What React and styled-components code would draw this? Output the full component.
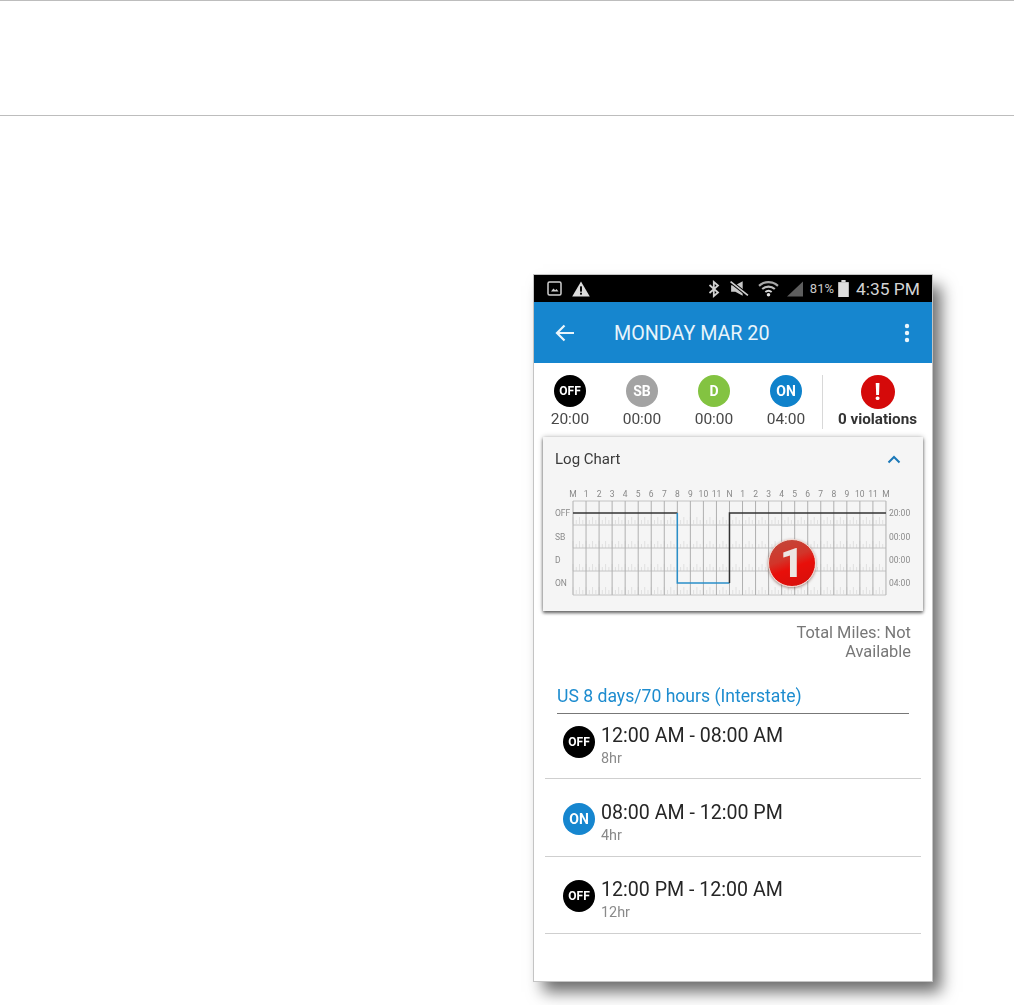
import styled, { createGlobalStyle } from 'styled-components';

const GlobalStyle = createGlobalStyle`
  html, body {
    margin: 0;
    padding: 0;
    background: #fff;
    font-family: Roboto, "Liberation Sans", sans-serif;
  }
`;

const Page = styled.div`
  width: 1014px;
  height: 1005px;
  overflow: hidden;
`;

const HeaderBand = styled.div`
  height: 114px;
  border-top: 1px solid #bdbdbd;
  border-bottom: 1px solid #bdbdbd;
`;

const Phone = styled.div`
  width: 398px;
  height: 706px;
  margin: 159px 0 0 534px;
  background: #fff;
  outline: 1px solid #c4c4c4;
  box-shadow: 9px 11px 15px rgba(0, 0, 0, 0.58);
  display: flex;
  flex-direction: column;
  filter: blur(0.35px);
`;

const StatusBar = styled.div`
  height: 27px;
  flex: none;
  background: #000;
  display: flex;
  align-items: center;
  padding: 0 12px 0 13px;
  color: #d6d6d6;
`;

const StatusLeft = styled.div`
  display: flex;
  align-items: center;
  gap: 10px;
  flex: 1;
`;

const StatusRight = styled.div`
  display: flex;
  align-items: center;
`;

const Percent = styled.span`
  font-size: 13px;
  margin: 0 4px 0 6px;
  color: #c8c8c8;
`;

const Clock = styled.span`
  font-size: 17.4px;
  margin-left: 7px;
  color: #d4d4d4;
`;

const AppBar = styled.div`
  height: 61px;
  flex: none;
  background: #1686cf;
  color: #e8f4fb;
  display: flex;
  align-items: center;
  padding: 0 22px 0 21px;
`;

const AppTitle = styled.div`
  flex: 1;
  margin: 2px 0 0 39px;
  font-size: 19.7px;
  white-space: nowrap;
`;

const StatsRow = styled.div`
  height: 74px;
  flex: none;
  display: flex;
  align-items: stretch;
`;

const Stat = styled.div`
  width: 72px;
  display: flex;
  flex-direction: column;
  align-items: center;
  padding-top: 12px;
  box-sizing: border-box;
`;

const Circle = styled.div`
  width: ${(p) => p.$size || 32}px;
  height: ${(p) => p.$size || 32}px;
  flex: none;
  border-radius: 50%;
  background: ${(p) => p.$color};
  color: #fff;
  font-weight: 700;
  font-size: ${(p) => p.$font || 13}px;
  display: flex;
  align-items: center;
  justify-content: center;
`;

const StatTime = styled.div`
  font-size: 15.5px;
  line-height: 18px;
  margin-top: 3px;
  color: #484848;
`;

const ViolationStat = styled.div`
  flex: 1;
  margin: 12px 0 8px;
  border-left: 1px solid #d8d8d8;
  display: flex;
  flex-direction: column;
  align-items: center;
`;

const ViolationText = styled.div`
  font-size: 15.2px;
  line-height: 18px;
  font-weight: 700;
  margin-top: 1px;
  color: #333;
  white-space: nowrap;
`;

const ChartCard = styled.div`
  position: relative;
  flex: none;
  width: 380px;
  height: 174px;
  margin-left: 9px;
  background: #f5f5f5;
  box-shadow: 0 2px 3px rgba(0, 0, 0, 0.55), 0 0 5px rgba(0, 0, 0, 0.28);
`;

const ChartHead = styled.div`
  height: 44px;
  display: flex;
  align-items: center;
  justify-content: space-between;
  padding: 0 22px 0 12px;
  font-size: 15px;
  color: #3a3a3a;
`;

const ChartSvg = styled.svg`
  display: block;
  font-family: Roboto, "Liberation Sans", sans-serif;
`;

const NumberBadge = styled.div`
  position: absolute;
  left: 225px;
  top: 102px;
  width: 46px;
  height: 46px;
  border-radius: 50%;
  border: 1.5px solid #f3d5cd;
  background: linear-gradient(160deg, #c04a3c 0%, #d2352a 40%, #e80f0a 58%, #d40f0c 100%);
  box-shadow: 0 1px 3px rgba(90, 40, 30, 0.55);
  color: #ece6e3;
  font-size: 41px;
  font-weight: 900;
  line-height: 47px;
  text-align: center;
`;

const TotalMiles = styled.div`
  margin: 12px 21px 0 auto;
  width: 130px;
  text-align: right;
  font-size: 16.4px;
  line-height: 19px;
  color: #777;
`;

const SectionTitle = styled.div`
  margin: 25px 23px 0;
  height: 27px;
  line-height: 21px;
  font-size: 17.6px;
  color: #1d8ccf;
  border-bottom: 1.5px solid #777;
  white-space: nowrap;
`;

const LogList = styled.div`
  margin: 0 11px;
`;

const LogRow = styled.div`
  height: ${(p) => p.$height}px;
  display: flex;
  gap: 6px;
  padding: ${(p) => p.$top}px 0 0 18px;
  box-sizing: border-box;
  border-bottom: 1px solid #cfcfcf;
`;

const LogIcon = styled(Circle)`
  margin-top: 1px;
`;

const LogTime = styled.div`
  font-size: 19.6px;
  line-height: 22px;
  color: #262626;
  white-space: nowrap;
`;

const LogDuration = styled.div`
  font-size: 14.4px;
  line-height: 16px;
  margin-top: 4px;
  color: #8a8a8a;
`;

const hours = ['M', '1', '2', '3', '4', '5', '6', '7', '8', '9', '10', '11', 'N', '1', '2', '3', '4', '5', '6', '7', '8', '9', '10', '11', 'M'];
const stats = [
  { label: 'OFF', color: '#000', time: '20:00', font: 12 },
  { label: 'SB', color: '#a3a3a3', time: '00:00', font: 14 },
  { label: 'D', color: '#83c341', time: '00:00', font: 14 },
  { label: 'ON', color: '#0f82cb', time: '04:00', font: 14 },
];
const rows = [
  { label: 'OFF', color: '#000', font: 12, time: '12:00 AM - 08:00 AM', dur: '8hr', height: 65, top: 11 },
  { label: 'ON', color: '#1686cf', font: 14, time: '08:00 AM - 12:00 PM', dur: '4hr', height: 78, top: 23 },
  { label: 'OFF', color: '#000', font: 12, time: '12:00 PM - 12:00 AM', dur: '12hr', height: 77, top: 22 },
];

// svg origin is the card corner + 44px head, so x = page x - 543, y = page y - 481
const X0 = 30;
const STEP = 13.04;
const rowTops = [20, 44, 67, 90, 114];
const rowLabels = [['OFF', '20:00', 32], ['SB', '00:00', 56], ['D', '00:00', 79], ['ON', '04:00', 102]];

const LogChart = () => (
  <ChartSvg width="380" height="130" viewBox="0 0 380 130">
    {hours.map((h, i) => (
      <text key={i} x={X0 + i * STEP} y="16" fontSize="8.5" fill="#888" textAnchor="middle">{h}</text>
    ))}
    {/* quarter hour ticks */}
    {rowTops.slice(0, 4).map((y) =>
      Array.from({ length: 96 }).map((_, i) => (
        <line
          key={`${y}-${i}`}
          x1={X0 + (i * STEP) / 4}
          x2={X0 + (i * STEP) / 4}
          y1={y + (i % 2 === 0 ? 16 : 19)}
          y2={y + 23}
          stroke="#e0e0e0"
          strokeWidth="1"
        />
      ))
    )}
    {rowTops.map((y) => (
      <line key={y} x1={X0} x2={X0 + 24 * STEP} y1={y} y2={y} stroke="#c4c4c4" strokeWidth="1" />
    ))}
    {hours.map((_, i) => (
      <line key={i} x1={X0 + i * STEP} x2={X0 + i * STEP} y1="20" y2="114" stroke="#b0b0b0" strokeWidth="1" />
    ))}
    {rowLabels.map(([name, total, y]) => (
      <g key={name}>
        <text x="12" y={y + 3} fontSize="8.5" fill="#8a8a8a">{name}</text>
        <text x="346" y={y + 3} fontSize="8.5" fill="#8a8a8a">{total}</text>
      </g>
    ))}
    <path d={`M${X0} 32H${X0 + 8 * STEP}`} fill="none" stroke="#333" strokeWidth="1.5" />
    <path d={`M${X0 + 8 * STEP} 32V102H${X0 + 12 * STEP}`} fill="none" stroke="#2a8fc9" strokeWidth="1.5" />
    <path d={`M${X0 + 12 * STEP} 102V32H${X0 + 24 * STEP}`} fill="none" stroke="#333" strokeWidth="1.5" />
  </ChartSvg>
);

export default function App() {
  return (
    <Page>
      <GlobalStyle />
      <HeaderBand />
      <Phone>
        <StatusBar>
          <StatusLeft>
            <svg width="15" height="15" viewBox="0 0 15 15">
              <rect x="1" y="1" width="13" height="13" rx="1.5" fill="none" stroke="#d0d0d0" strokeWidth="1.5" />
              <path d="M4 10.5l2.4-3 1.8 1.8 1.3-1.2L11.5 10.5z" fill="#d0d0d0" />
            </svg>
            <svg width="18" height="16" viewBox="0 0 17 15">
              <path d="M8.5 0.5L16.8 14.5H0.2z" fill="#dcdcdc" />
              <rect x="7.6" y="5" width="1.8" height="5" fill="#000" />
              <rect x="7.6" y="11" width="1.8" height="1.8" fill="#000" />
            </svg>
          </StatusLeft>
          <StatusRight>
            <svg width="12" height="18" viewBox="0 0 12 17">
              <path d="M1.5 4.5L10 12L5.8 15.5V1.5L10 5L1.5 12.5" fill="none" stroke="#d0d0d0" strokeWidth="1.8" />
            </svg>
            <svg width="20" height="17" viewBox="0 0 19 16" style={{ marginLeft: 9 }}>
              <path d="M2 5H6L13 1V15L6 11H2z" fill="#c8c8c8" />
              <path d="M1.5 1.5L18 14.5" stroke="#000" strokeWidth="3.4" />
              <path d="M1.5 1.5L18 14.5" stroke="#d0d0d0" strokeWidth="1.6" />
            </svg>
            <svg width="21" height="17" viewBox="0 0 20 16" style={{ marginLeft: 9 }}>
              <path d="M1 5.5C6 0.8 14 0.8 19 5.5" fill="none" stroke="#a8a8a8" strokeWidth="2" />
              <path d="M4 8.5C7.5 5.4 12.5 5.4 16 8.5" fill="none" stroke="#bcbcbc" strokeWidth="2" />
              <path d="M7 11.3C8.8 9.8 11.2 9.8 13 11.3" fill="none" stroke="#d8d8d8" strokeWidth="1.8" />
              <circle cx="10" cy="14" r="1.7" fill="#e0e0e0" />
            </svg>
            <svg width="18" height="16" viewBox="0 0 16 15" style={{ marginLeft: 7 }}>
              <path d="M0.5 14.5L15.5 0.5V14.5z" fill="#5e5e5e" />
            </svg>
            <Percent>81%</Percent>
            <svg width="11" height="17" viewBox="0 0 10 16">
              <rect x="3" y="0" width="4" height="2" fill="#d8d8d8" />
              <rect x="0" y="2" width="10" height="14" fill="#dedede" />
            </svg>
            <Clock>4:35 PM</Clock>
          </StatusRight>
        </StatusBar>
        <AppBar>
          <svg width="20" height="18" viewBox="0 0 20 18">
            <path d="M19 9H2M9.5 1.5L2 9l7.5 7.5" fill="none" stroke="#eaf5fb" strokeWidth="2.2" />
          </svg>
          <AppTitle>MONDAY MAR 20</AppTitle>
          <svg width="6" height="20" viewBox="0 0 6 20">
            <circle cx="3" cy="3" r="2.2" fill="#eaf5fb" />
            <circle cx="3" cy="10" r="2.2" fill="#eaf5fb" />
            <circle cx="3" cy="17" r="2.2" fill="#eaf5fb" />
          </svg>
        </AppBar>
        <StatsRow>
          {stats.map((s) => (
            <Stat key={s.label}>
              <Circle $color={s.color} $font={s.font}>{s.label}</Circle>
              <StatTime>{s.time}</StatTime>
            </Stat>
          ))}
          <ViolationStat>
            <Circle $color="#d50a0a" $size={34} $font={24}>!</Circle>
            <ViolationText>0 violations</ViolationText>
          </ViolationStat>
        </StatsRow>
        <ChartCard>
          <ChartHead>
            Log Chart
            <svg width="14" height="9" viewBox="0 0 14 9">
              <path d="M1.5 7.5L7 2l5.5 5.5" fill="none" stroke="#1b78b8" strokeWidth="2" />
            </svg>
          </ChartHead>
          <LogChart />
          <NumberBadge>1</NumberBadge>
        </ChartCard>
        <TotalMiles>Total Miles: Not Available</TotalMiles>
        <SectionTitle>US 8 days/70 hours (Interstate)</SectionTitle>
        <LogList>
          {rows.map((r) => (
            <LogRow key={r.time} $height={r.height} $top={r.top}>
              <LogIcon $color={r.color} $font={r.font}>{r.label}</LogIcon>
              <div>
                <LogTime>{r.time}</LogTime>
                <LogDuration>{r.dur}</LogDuration>
              </div>
            </LogRow>
          ))}
        </LogList>
      </Phone>
    </Page>
  );
}
